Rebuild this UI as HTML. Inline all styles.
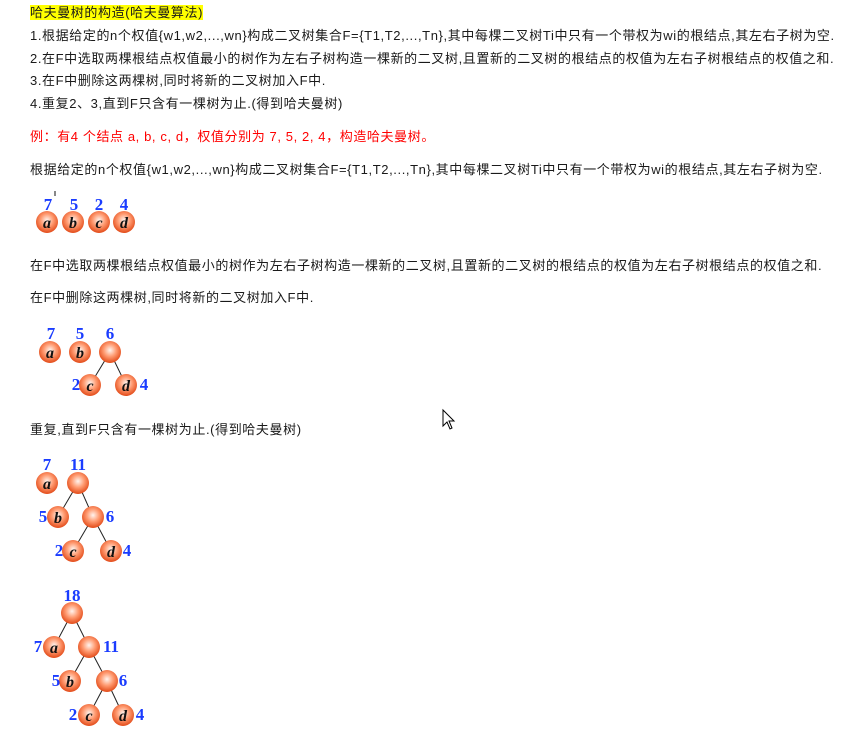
<!DOCTYPE html>
<html><head><meta charset="utf-8"><style>
html,body{margin:0;padding:0;background:#fff;width:847px;height:749px;overflow:hidden;position:relative}
.t{position:absolute;left:30px;font-family:"Liberation Sans","Noto Sans CJK SC",sans-serif;font-size:13px;letter-spacing:0.6px;color:#1a1a1a;white-space:nowrap;line-height:16px}
.hl{background:#ffff00}
.red{color:#ff0000}
svg{position:absolute;left:0;top:0}
svg text{font-family:"Liberation Serif",serif;font-weight:700;fill:#1a3cff;font-size:17px;text-anchor:middle}
svg text.n{fill:#111;font-style:italic;font-size:16px}
</style></head><body>
<div class="t" style="top:5px"><span class="hl">哈夫曼树的构造(哈夫曼算法)</span></div>
<div class="t" style="top:28px">1.根据给定的n个权值{w1,w2,...,wn}构成二叉树集合F={T1,T2,...,Tn},其中每棵二叉树Ti中只有一个带权为wi的根结点,其左右子树为空.</div>
<div class="t" style="top:51px">2.在F中选取两棵根结点权值最小的树作为左右子树构造一棵新的二叉树,且置新的二叉树的根结点的权值为左右子树根结点的权值之和.</div>
<div class="t" style="top:73px">3.在F中删除这两棵树,同时将新的二叉树加入F中.</div>
<div class="t" style="top:96px">4.重复2、3,直到F只含有一棵树为止.(得到哈夫曼树)</div>
<div class="t red" style="top:129px">例：有4 个结点 a, b, c, d，权值分别为 7, 5, 2, 4，构造哈夫曼树。</div>
<div class="t" style="top:162px">根据给定的n个权值{w1,w2,...,wn}构成二叉树集合F={T1,T2,...,Tn},其中每棵二叉树Ti中只有一个带权为wi的根结点,其左右子树为空.</div>
<div class="t" style="top:258px">在F中选取两棵根结点权值最小的树作为左右子树构造一棵新的二叉树,且置新的二叉树的根结点的权值为左右子树根结点的权值之和.</div>
<div class="t" style="top:290px">在F中删除这两棵树,同时将新的二叉树加入F中.</div>
<div class="t" style="top:422px">重复,直到F只含有一棵树为止.(得到哈夫曼树)</div>
<svg width="847" height="749">
<defs><radialGradient id="g" cx="0.5" cy="0.42" r="0.58"><stop offset="0" stop-color="#fff4ee"/><stop offset="0.5" stop-color="#ff9a70"/><stop offset="1" stop-color="#e24a18"/></radialGradient></defs>
<g stroke="#222" stroke-width="1">
<line x1="110" y1="352" x2="90" y2="385"/><line x1="110" y1="352" x2="126" y2="385"/>
<line x1="78" y1="483" x2="58" y2="517"/><line x1="78" y1="483" x2="93" y2="517"/>
<line x1="93" y1="517" x2="73" y2="551"/><line x1="93" y1="517" x2="111" y2="551"/>
<line x1="72" y1="613" x2="54" y2="647"/><line x1="72" y1="613" x2="89" y2="647"/>
<line x1="89" y1="647" x2="70" y2="681"/><line x1="89" y1="647" x2="107" y2="681"/>
<line x1="107" y1="681" x2="89" y2="715"/><line x1="107" y1="681" x2="123" y2="715"/>
</g>
<g fill="url(#g)">
<circle cx="47" cy="222" r="11"/><circle cx="73" cy="222" r="11"/><circle cx="99" cy="222" r="11"/><circle cx="124" cy="222" r="11"/>
<circle cx="50" cy="352" r="11"/><circle cx="80" cy="352" r="11"/><circle cx="110" cy="352" r="11"/><circle cx="90" cy="385" r="11"/><circle cx="126" cy="385" r="11"/>
<circle cx="47" cy="483" r="11"/><circle cx="78" cy="483" r="11"/><circle cx="58" cy="517" r="11"/><circle cx="93" cy="517" r="11"/><circle cx="73" cy="551" r="11"/><circle cx="111" cy="551" r="11"/>
<circle cx="72" cy="613" r="11"/><circle cx="54" cy="647" r="11"/><circle cx="89" cy="647" r="11"/><circle cx="70" cy="681" r="11"/><circle cx="107" cy="681" r="11"/><circle cx="89" cy="715" r="11"/><circle cx="123" cy="715" r="11"/>
</g>
<text class="n" x="47" y="228">a</text><text class="n" x="73" y="228">b</text><text class="n" x="99" y="228">c</text><text class="n" x="124" y="228">d</text>
<text x="48" y="210">7</text><text x="74" y="210">5</text><text x="99" y="210">2</text><text x="124" y="210">4</text>
<line x1="55" y1="191" x2="55" y2="196" stroke="#111" stroke-width="1"/>
<text class="n" x="50" y="358">a</text><text class="n" x="80" y="358">b</text><text class="n" x="90" y="391">c</text><text class="n" x="126" y="391">d</text>
<text x="51" y="339">7</text><text x="80" y="339">5</text><text x="110" y="339">6</text><text x="76" y="390">2</text><text x="144" y="390">4</text>
<text class="n" x="47" y="489">a</text><text class="n" x="58" y="523">b</text><text class="n" x="73" y="557">c</text><text class="n" x="111" y="557">d</text>
<text x="47" y="470">7</text><text x="78" y="470">11</text><text x="43" y="522">5</text><text x="110" y="522">6</text><text x="59" y="556">2</text><text x="127" y="556">4</text>
<text class="n" x="54" y="653">a</text><text class="n" x="70" y="687">b</text><text class="n" x="89" y="721">c</text><text class="n" x="123" y="721">d</text>
<text x="72" y="601">18</text><text x="38" y="652">7</text><text x="111" y="652">11</text><text x="56" y="686">5</text><text x="123" y="686">6</text><text x="73" y="720">2</text><text x="140" y="720">4</text>
<path d="M443 410 L443 426 L447 422 L450 429 L452 428 L449 421 L454 421 Z" fill="#fff" stroke="#000" stroke-width="1"/>
</svg>
</body></html>
